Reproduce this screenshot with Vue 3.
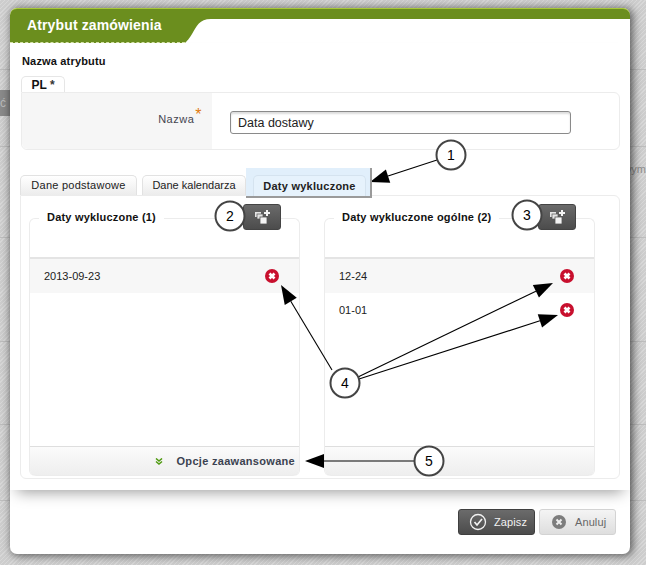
<script setup>
// numbered callouts lying over the dialog
const badges = [
  { n: 1, x: 451, y: 155 },
  { n: 2, x: 230, y: 216 },
  { n: 3, x: 527, y: 215 },
  { n: 4, x: 345, y: 383 },
  { n: 5, x: 429, y: 461 },
]
const arrows = [
  [437, 160, 370, 182],
  [332, 370, 281, 285],
  [358, 377, 553, 283],
  [359, 379, 558, 315],
  [414, 461, 305, 461],
].map(([x1, y1, x2, y2]) => {
  const a = Math.atan2(y2 - y1, x2 - x1)
  const bx = x2 - Math.cos(a) * 19
  const by = y2 - Math.sin(a) * 19
  const dx = -Math.sin(a) * 7
  const dy = Math.cos(a) * 7
  return {
    x1, y1, x2: bx, y2: by,
    head: `${x2},${y2} ${bx + dx},${by + dy} ${bx - dx},${by - dy}`,
  }
})

const leftDates = ['2013-09-23']
const rightDates = ['12-24', '01-01']
const backRows = [69, 76, 90, 103, 82, 75]
</script>

<template>
  <div class="page">
    <div class="backdrop">
      <div v-for="(h, i) in backRows" :key="i" class="back-row" :style="{ height: h + 'px' }" />
      <span class="back-btn">ć</span>
      <span class="back-text">wym</span>
    </div>

    <div class="dialog">
      <header class="head">
        <div class="head-title">Atrybut zamówienia</div>
        <svg class="head-curve" width="26" height="35" viewBox="0 0 26 35">
          <path d="M0 0H26V11C14 11 12 18 7 26C4 31 2 33 0 35Z" fill="#6b8e1e" />
          <path d="M0 .5H26" stroke="#a9c93a" />
        </svg>
        <div class="head-rest" />
      </header>

      <div class="body">
        <div class="attr-title">Nazwa atrybutu</div>
        <div class="lang-tab">PL <span class="star">*</span></div>
        <div class="name-panel">
          <div class="name-label">Nazwa<span class="req">*</span></div>
          <div class="name-field">
            <div class="name-input">Data dostawy</div>
          </div>
        </div>

        <div class="tabs">
          <div class="tab">Dane podstawowe</div>
          <div class="tab tab-second">Dane kalendarza</div>
          <div class="tab-mark">
            <div class="tab tab-active">Daty wykluczone</div>
          </div>
        </div>

        <div class="tab-panel">
          <section class="group">
            <div class="legend-row">
              <h4 class="legend">Daty wykluczone (1)</h4>
              <button class="add-btn">
                <svg width="15" height="14" viewBox="0 0 15 14">
                  <rect x="0" y="2" width="6" height="5" fill="#e4e4e4" />
                  <rect x="2" y="4" width="6" height="5" fill="#e4e4e4" stroke="#555" stroke-width=".7" />
                  <rect x="5" y="7" width="7" height="7" fill="#f4f4f4" stroke="#555" stroke-width=".8" />
                  <path d="M9 2h2V0h2v2h2v2h-2v2h-2V4H9z" fill="#f4f4f4" />
                </svg>
              </button>
            </div>
            <div class="rows">
              <div v-for="d in leftDates" :key="d" class="date-row">
                <span>{{ d }}</span>
                <svg class="del" width="14" height="14" viewBox="0 0 14 14">
                  <circle cx="7" cy="7" r="7" fill="#c8102e" />
                  <path d="M4.5 4.5l5 5M9.5 4.5l-5 5" stroke="#fff" stroke-width="2.7" />
                </svg>
              </div>
            </div>
            <div class="group-foot">
              <svg width="8" height="7" viewBox="0 0 8 7" fill="none" stroke="#4f9a10" stroke-width="1.5">
                <path d="M1 0.5l3 2.5 3-2.5M1 3.5l3 2.5 3-2.5" />
              </svg>
              <span class="adv">Opcje zaawansowane</span>
            </div>
          </section>

          <section class="group group-right">
            <div class="legend-row">
              <h4 class="legend">Daty wykluczone ogólne (2)</h4>
              <button class="add-btn">
                <svg width="15" height="14" viewBox="0 0 15 14">
                  <rect x="0" y="2" width="6" height="5" fill="#e4e4e4" />
                  <rect x="2" y="4" width="6" height="5" fill="#e4e4e4" stroke="#555" stroke-width=".7" />
                  <rect x="5" y="7" width="7" height="7" fill="#f4f4f4" stroke="#555" stroke-width=".8" />
                  <path d="M9 2h2V0h2v2h2v2h-2v2h-2V4H9z" fill="#f4f4f4" />
                </svg>
              </button>
            </div>
            <div class="rows">
              <div v-for="d in rightDates" :key="d" class="date-row">
                <span>{{ d }}</span>
                <svg class="del" width="14" height="14" viewBox="0 0 14 14">
                  <circle cx="7" cy="7" r="7" fill="#c8102e" />
                  <path d="M4.5 4.5l5 5M9.5 4.5l-5 5" stroke="#fff" stroke-width="2.7" />
                </svg>
              </div>
            </div>
            <div class="group-foot" />
          </section>
        </div>
      </div>

      <footer class="foot">
        <button class="btn btn-save">
          <svg width="18" height="18" viewBox="0 0 18 18" fill="none" stroke="#f2f2f2">
            <circle cx="9" cy="9" r="7.5" stroke-width="1.3" />
            <path d="M5.5 9l2.5 3 5-6" stroke-width="1.7" />
          </svg>
          Zapisz
        </button>
        <button class="btn btn-cancel">
          <svg width="14" height="14" viewBox="0 0 14 14">
            <circle cx="7" cy="7" r="7" fill="#7d7d7d" />
            <path d="M4.5 4.5l5 5M9.5 4.5l-5 5" stroke="#eee" stroke-width="2" />
          </svg>
          Anuluj
        </button>
      </footer>
    </div>

    <svg class="callouts" width="646" height="565" viewBox="0 0 646 565">
      <g v-for="(a, i) in arrows" :key="i">
        <line :x1="a.x1" :y1="a.y1" :x2="a.x2" :y2="a.y2" stroke="#000" stroke-width="1.1" />
        <polygon :points="a.head" fill="#000" />
      </g>
      <g v-for="b in badges" :key="b.n">
        <circle :cx="b.x" :cy="b.y" r="14.5" fill="#fff" stroke="#444" stroke-width="2" />
        <text :x="b.x" :y="b.y + 5" text-anchor="middle" class="badge-num">{{ b.n }}</text>
      </g>
    </svg>
  </div>
</template>

<style scoped>
.page {
  position: relative;
  width: 646px;
  height: 565px;
  overflow: hidden;
  padding: 8px 16px 11px 10px;
  box-sizing: border-box;
  font-family: "Liberation Sans", Arial, sans-serif;
  background: repeating-linear-gradient(135deg, #d8d8d8 0 1px, #cdcdcd 1px 3px);
}
.backdrop {
  position: absolute;
  inset: 0;
  display: flex;
  flex-direction: column;
}
.back-row { border-bottom: 1px solid #bdbdbd; }
.back-btn {
  position: absolute;
  left: 0;
  top: 90px;
  width: 10px;
  height: 26px;
  background: #8a8a8a;
  color: #bbb;
  font-size: 12px;
  line-height: 26px;
}
.back-text {
  position: absolute;
  right: 0;
  top: 163px;
  color: #8d8d8d;
  font-size: 11px;
}

.dialog {
  position: relative;
  width: 620px;
  height: 546px;
  background: #fff;
  border-radius: 7px;
  box-shadow: 2px 1px 8px 1px rgba(0, 0, 0, 0.55);
  display: flex;
  flex-direction: column;
}

.head {
  display: flex;
  height: 35px;
  flex: none;
}
.head-title {
  width: 175px;
  box-sizing: border-box;
  padding: 8px 0 0 17px;
  background: #6b8e1e;
  border-top: 1px solid #a9c93a;
  border-bottom: 1px dashed #d5e2a8;
  border-top-left-radius: 7px;
  color: #fff;
  font-size: 14px;
  font-weight: bold;
  letter-spacing: 0.13px;
  line-height: 17px;
}
.head-curve { display: block; flex: none; }
.head-rest {
  flex: 1;
  height: 11px;
  box-sizing: border-box;
  background: #6b8e1e;
  border-top: 1px solid #a9c93a;
  border-top-right-radius: 7px;
}

.body {
  position: relative;
  flex: none;
  height: 447px;
  box-sizing: border-box;
  padding: 11px 10px 0 11px;
  background: #fff;
  box-shadow: 0 9px 14px -7px rgba(0, 0, 0, 0.4);
}
.attr-title {
  margin-left: 1px;
  font-size: 11px;
  font-weight: bold;
  letter-spacing: 0.17px;
  line-height: 14px;
  color: #111;
}
.lang-tab {
  width: 44px;
  height: 16px;
  margin-top: 8px;
  box-sizing: border-box;
  border: 1px solid #e6e6e6;
  border-bottom: 0;
  border-radius: 5px 5px 0 0;
  text-align: center;
  font-size: 12px;
  font-weight: bold;
  line-height: 16px;
  color: #111;
}
.star { color: #333; }
.name-panel {
  display: flex;
  height: 58px;
  box-sizing: border-box;
  border: 1px solid #ececec;
  border-radius: 0 6px 6px 6px;
}
.name-label {
  width: 190px;
  box-sizing: border-box;
  padding: 17px 10px 0 0;
  background: #f6f6f6;
  border-radius: 0 0 0 6px;
  text-align: right;
  font-size: 11px;
  letter-spacing: 0.5px;
  line-height: 14px;
  color: #45454f;
}
.req {
  color: #e07a10;
  font-size: 16px;
  line-height: 10px;
  vertical-align: 3px;
  margin-left: 1px;
}
.name-field {
  flex: 1;
  padding: 18px 0 0 18px;
}
.name-input {
  width: 341px;
  height: 23px;
  box-sizing: border-box;
  padding-left: 7px;
  border: 1px solid #8a8a8a;
  border-radius: 3px;
  box-shadow: inset 0 2px 2px #ddd;
  font-size: 12.5px;
  line-height: 22px;
  color: #222;
}

.tabs {
  display: flex;
  align-items: flex-end;
  height: 30px;
  margin-top: 15px;
  margin-left: -1px;
}
.tab {
  width: 117px;
  height: 20px;
  box-sizing: border-box;
  border: 1px solid #e2e2e2;
  border-bottom: 0;
  border-radius: 5px 5px 0 0;
  background: linear-gradient(#fff, #ececec);
  text-align: center;
  font-size: 11px;
  letter-spacing: 0.25px;
  line-height: 19px;
  color: #222;
}
.tab-second {
  width: 104px;
  margin-left: 5px;
  letter-spacing: 0;
}
.tab-mark {
  position: relative;
  z-index: 1;
  width: 126px;
  height: 30px;
  margin: 0 0 -3px 0;
  box-sizing: border-box;
  padding: 7px 4px 0 7px;
  background: #e1effb;
  border-right: 2px solid #9a9a9a;
  border-bottom: 2px solid #9a9a9a;
}
.tab-active {
  width: 113px;
  height: 21px;
  border-color: #d5e3ef;
  background: #e6f2fc;
  font-weight: bold;
  line-height: 20px;
}

.tab-panel {
  display: flex;
  gap: 24px;
  height: 284px;
  margin-left: -1px;
  width: 600px;
  box-sizing: border-box;
  padding: 8px 0 2px 8px;
  border: 1px solid #ececec;
  border-radius: 0 6px 6px 6px;
}
.group {
  position: relative;
  display: flex;
  flex-direction: column;
  width: 271px;
  margin-top: 14px;
  box-sizing: border-box;
  border: 1px solid #ececec;
  border-bottom: 0;
  border-radius: 6px;
  background: #fff;
}
.legend-row {
  position: absolute;
  left: 9px;
  right: 18px;
  top: -15px;
  height: 26px;
  display: flex;
  justify-content: space-between;
  align-items: center;
}
.legend {
  margin: 0;
  padding: 0 8px;
  background: #fff;
  font-size: 11px;
  font-weight: bold;
  letter-spacing: 0.2px;
  color: #111;
}
.add-btn {
  width: 38px;
  height: 26px;
  padding: 0;
  display: flex;
  align-items: center;
  justify-content: center;
  border: 1px solid #444;
  border-radius: 3px;
  background: linear-gradient(#6a6a6a, #4c4c4c);
}
.rows {
  flex: 1;
  margin-top: 38px;
  border-top: 2px solid #e4e4e4;
}
.date-row {
  display: flex;
  align-items: center;
  justify-content: space-between;
  height: 34px;
  padding: 0 20px 0 14px;
  font-size: 11px;
  color: #222;
}
.date-row:first-child { background: #f7f7f7; }
.del { display: block; }
.group-foot {
  height: 30px;
  box-sizing: border-box;
  display: flex;
  align-items: center;
  justify-content: flex-end;
  gap: 14px;
  padding-right: 4px;
  border-top: 1px solid #dedede;
  border-bottom: 1px solid #ececec;
  border-radius: 0 0 6px 6px;
  background: linear-gradient(#fbfbfb, #eeeeee);
}
.adv {
  font-size: 11px;
  font-weight: bold;
  letter-spacing: 0.3px;
  color: #3b4250;
}

.foot {
  flex: 1;
  display: flex;
  justify-content: flex-end;
  gap: 4px;
  padding: 19px 14px 0 0;
}
.btn {
  width: 77px;
  height: 26px;
  padding: 0 0 0 10px;
  display: flex;
  align-items: center;
  gap: 7px;
  box-sizing: border-box;
  border-radius: 3px;
  font-family: inherit;
  font-size: 11px;
  letter-spacing: 0.1px;
}
.btn-save {
  border: 1px solid #3f3f3f;
  background: linear-gradient(#6b6b6b, #4b4b4b);
  color: #f2f2f2;
}
.btn-cancel {
  gap: 9px;
  padding-left: 12px;
  border: 1px solid #d3d3d3;
  background: linear-gradient(#f4f4f4, #dedede);
  color: #666;
}

.callouts {
  position: absolute;
  left: 0;
  top: 0;
  pointer-events: none;
}
.badge-num {
  font-family: "Liberation Sans", Arial, sans-serif;
  font-size: 14px;
  fill: #000;
}
</style>
